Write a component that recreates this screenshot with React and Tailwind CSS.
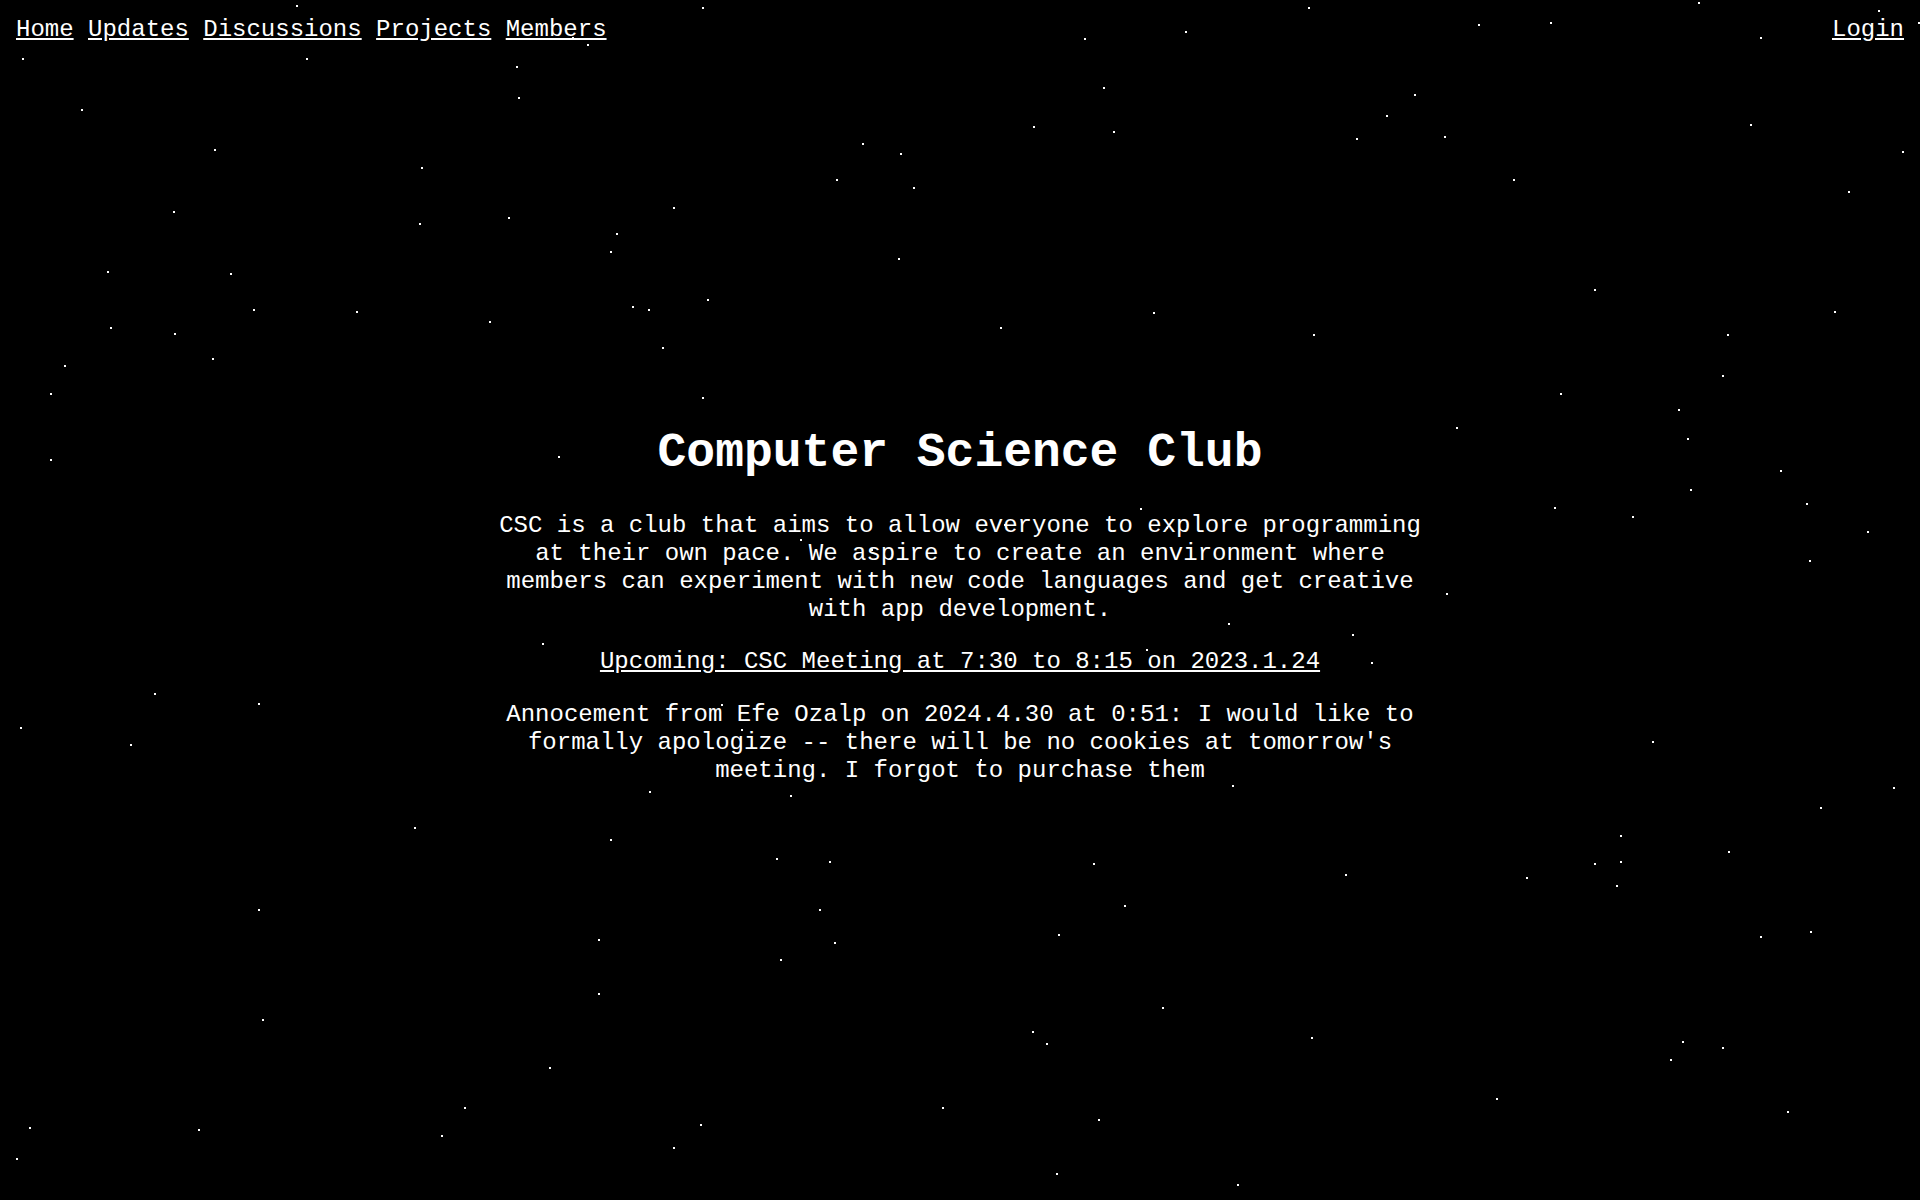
import React from 'react';

// star positions, read off a 1568px wide capture, scaled up to 1920
const STARS = [
    [242, 4], [573, 6], [1068, 6], [1387, 2], [1534, 8], [1566, 18], [18, 47], [250, 47], [421, 54],
    [479, 36], [885, 31], [968, 25], [1207, 20], [1266, 18], [66, 89], [423, 79], [901, 71], [1155, 77],
    [1132, 94], [175, 122], [344, 136], [704, 117], [735, 125], [844, 103], [909, 107], [1107, 113],
    [1179, 111], [1429, 101], [1553, 123], [683, 146], [746, 153], [1236, 146], [1509, 156], [141, 172],
    [342, 182], [415, 177], [550, 169], [503, 190], [498, 205], [87, 221], [188, 223], [733, 211],
    [1302, 236], [207, 252], [291, 254], [399, 262], [516, 250], [529, 252], [577, 244], [817, 267],
    [942, 255], [1072, 273], [1498, 254], [90, 267], [142, 272], [173, 292], [52, 298], [541, 283],
    [1410, 273], [1406, 306], [41, 321], [573, 324], [1274, 321], [1370, 334], [1189, 349], [41, 375],
    [456, 372], [1378, 358], [1454, 384], [1380, 399], [1475, 411], [1269, 414], [1333, 421], [931, 415],
    [1525, 434], [1477, 457], [653, 440], [711, 448], [1181, 484], [1003, 509], [443, 525], [1104, 518],
    [1120, 541], [936, 530], [126, 566], [211, 574], [16, 594], [106, 608], [589, 575], [1349, 605],
    [530, 646], [645, 649], [1006, 641], [1546, 643], [1486, 659], [338, 675], [498, 685], [1323, 682],
    [1411, 695], [634, 701], [677, 703], [893, 705], [1302, 705], [1323, 703], [1098, 714], [1246, 716],
    [1320, 723], [211, 742], [669, 742], [918, 739], [488, 767], [681, 769], [864, 763], [1437, 764],
    [1478, 760], [637, 783], [488, 811], [949, 822], [214, 832], [843, 842], [854, 852], [1071, 847],
    [1374, 850], [1406, 855], [1364, 865], [448, 871], [1222, 897], [379, 904], [769, 904], [1459, 907],
    [897, 914], [24, 920], [162, 922], [572, 918], [360, 927], [550, 937], [13, 946], [862, 958],
    [1010, 967], [605, 595], [800, 620], [940, 628], [820, 428], [952, 430], [467, 30], [1437, 30],
];

const Starfield = () => (
    <svg className="absolute inset-0 pointer-events-none" width="1920" height="1200" viewBox="0 0 1920 1200">
        {STARS.map(([x, y], i) => (
            <rect key={i} x={Math.round(x * 1.2245)} y={Math.round(y * 1.2245)} width="2" height="2" fill="#fff" />
        ))}
    </svg>
);

const App = () => {
    return (
        <div className="relative min-h-screen bg-black text-white font-['Liberation_Mono',monospace] text-[24px] overflow-hidden">
            <Starfield />
            <nav className="absolute top-0 inset-x-0 flex justify-between px-4 pt-4 leading-[27px] z-10">
                <div className="whitespace-pre">
                    <a href="#" className="underline">Home</a>{' '}
                    <a href="#" className="underline">Updates</a>{' '}
                    <a href="#" className="underline">Discussions</a>{' '}
                    <a href="#" className="underline">Projects</a>{' '}
                    <a href="#" className="underline">Members</a>
                </div>
                <a href="#" className="underline">Login</a>
            </nav>
            <main className="relative flex min-h-screen items-center justify-center pt-[10px]">
                <div className="w-[960px] text-center">
                    <h1 className="text-[48px] font-bold leading-[54px] mb-8">Computer Science Club</h1>
                    <p className="leading-[28px] mb-6">
                        CSC is a club that aims to allow everyone to explore programming at their own pace. We aspire to create an environment where members can experiment with new code languages and get creative with app development.
                    </p>
                    <p className="leading-[28px] mb-[25px]">
                        <a href="#" className="underline">Upcoming: CSC Meeting at 7:30 to 8:15 on 2023.1.24</a>
                    </p>
                    <p className="leading-[28px]">
                        Annocement from Efe Ozalp on 2024.4.30 at 0:51: I would like to formally apologize -- there will be no cookies at tomorrow's meeting. I forgot to purchase them
                    </p>
                </div>
            </main>
        </div>
    );
};

export default App;
